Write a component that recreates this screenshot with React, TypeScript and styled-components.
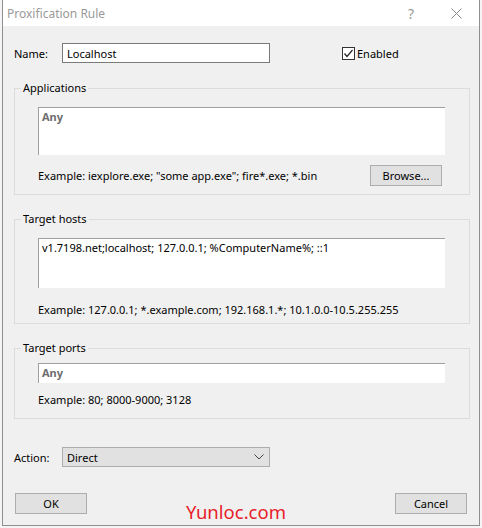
import React from "react";
import styled, { createGlobalStyle } from "styled-components";

const GlobalStyle = createGlobalStyle`
  html, body {
    margin: 0;
    padding: 0;
    background: #f4f4f4;
  }
  body {
    font-family: "Noto Sans", "Open Sans", Arial, sans-serif;
    font-size: 11px;
    color: #000;
  }
`;

const Window = styled.div`
  margin-left: 2px;
  width: 478px;
  height: 526px;
  box-sizing: border-box;
  border: 1px solid #8f8f8f;
  border-top: none;
  background: #f0f0f0;
  display: flex;
  flex-direction: column;
`;

const TitleBar = styled.div`
  height: 26px;
  background: #fff;
  display: flex;
  align-items: center;
  padding-left: 4px;
`;

const Title = styled.div`
  flex: 1;
  color: #999;
  font-size: 12px;
`;

const TitleButton = styled.div<{ $w: number }>`
  width: ${({ $w }) => $w}px;
  height: 26px;
  display: flex;
  align-items: center;
  justify-content: center;
  color: #9a9a9a;
  font-size: 14px;
`;

const Body = styled.div`
  flex: 1;
  padding: 17px 0 0 11px;
  display: flex;
  flex-direction: column;
`;

const Row = styled.div<{ $mt?: number }>`
  display: flex;
  align-items: center;
  margin-top: ${({ $mt }) => $mt ?? 0}px;
`;

const Label = styled.span`
  width: 48px;
`;

const TextInput = styled.div<{ $w: number }>`
  width: ${({ $w }) => $w}px;
  height: 20px;
  box-sizing: border-box;
  border: 1px solid #7a7a7a;
  background: #fff;
  display: flex;
  align-items: center;
  padding-left: 4px;
`;

const CheckLabel = styled.label`
  display: flex;
  align-items: center;
  margin-left: 72px;
  gap: 2px;
`;

const Box = styled.span`
  width: 13px;
  height: 13px;
  box-sizing: border-box;
  border: 1px solid #333;
  background: #fff;
  display: flex;
  align-items: center;
  justify-content: center;
`;

const Group = styled.fieldset<{ $mt: number; $pb: number }>`
  width: 456px;
  box-sizing: border-box;
  margin: ${({ $mt }) => $mt}px 0 0 0;
  padding: 0 0 ${({ $pb }) => $pb}px 23px;
  border: 1px solid #dcdcdc;
  min-width: 0;
`;

const Legend = styled.legend`
  margin-left: -17px;
  padding: 0 2px;
  line-height: 16px;
  height: 16px;
`;

const Memo = styled.div<{ $h: number; $mt: number }>`
  width: 407px;
  height: ${({ $h }) => $h}px;
  margin-top: ${({ $mt }) => $mt}px;
  box-sizing: border-box;
  background: #fff;
  border-top: 1px solid #a0a0a0;
  border-left: 1px solid #a0a0a0;
  padding: 1px 3px;
  line-height: 15px;
`;

const Placeholder = styled.span`
  font-weight: bold;
  color: #6d6d6d;
`;

const Hint = styled.div<{ $mt?: number }>`
  margin-top: ${({ $mt }) => $mt ?? 0}px;
  line-height: 16px;
`;

const HintRow = styled.div`
  width: 404px;
  margin-top: 10px;
  display: flex;
  align-items: center;
  justify-content: space-between;
`;

const Button = styled.button`
  width: 72px;
  height: 21px;
  box-sizing: border-box;
  border: 1px solid #adadad;
  background: #e1e1e1;
  font-family: inherit;
  font-size: 11px;
  color: #000;
  padding: 0;
`;

const Select = styled.div`
  width: 208px;
  height: 20px;
  box-sizing: border-box;
  border: 1px solid #adadad;
  background: #e1e1e1;
  display: flex;
  align-items: center;
  justify-content: space-between;
  padding: 0 5px 0 4px;
`;

const Footer = styled.div`
  margin-top: 26px;
  width: 452px;
  margin-left: 1px;
  display: flex;
  align-items: flex-start;
  justify-content: space-between;
`;

const Watermark = styled.span`
  color: #e8202a;
  font-size: 18.5px;
  line-height: 20px;
  margin-right: 10px;
  margin-top: 9px;
`;

const App: React.FC = () => (
  <>
    <GlobalStyle />
    <Window>
      <TitleBar>
        <Title>Proxification Rule</Title>
        <TitleButton $w={44}>?</TitleButton>
        <TitleButton $w={46}>
          <svg width="11" height="11" viewBox="0 0 11 11">
            <path d="M0.5 0.5 L10.5 10.5 M10.5 0.5 L0.5 10.5" stroke="#8a8a8a" strokeWidth="1" fill="none" />
          </svg>
        </TitleButton>
      </TitleBar>
      <Body>
        <Row>
          <Label>Name:</Label>
          <TextInput $w={208}>Localhost</TextInput>
          <CheckLabel>
            <Box>
              <svg width="11" height="11" viewBox="0 0 11 11">
                <path d="M1.5 5.5 L4 8.5 L9.5 2" stroke="#222" strokeWidth="1.2" fill="none" />
              </svg>
            </Box>
            Enabled
          </CheckLabel>
        </Row>

        <Group $mt={17} $pb={8}>
          <Legend>Applications</Legend>
          <Memo $h={48} $mt={11}>
            <Placeholder>Any</Placeholder>
          </Memo>
          <HintRow>
            <span>Example: iexplore.exe; "some app.exe"; fire*.exe; *.bin</span>
            <Button>Browse...</Button>
          </HintRow>
        </Group>

        <Group $mt={16} $pb={5}>
          <Legend>Target hosts</Legend>
          <Memo $h={50} $mt={11}>
            v1.7198.net;localhost; 127.0.0.1; %ComputerName%; ::1
          </Memo>
          <Hint $mt={14}>Example: 127.0.0.1; *.example.com; 192.168.1.*; 10.1.0.0-10.5.255.255</Hint>
        </Group>

        <Group $mt={16} $pb={10}>
          <Legend>Target ports</Legend>
          <Memo $h={20} $mt={7}>
            <Placeholder>Any</Placeholder>
          </Memo>
          <Hint $mt={9}>Example: 80; 8000-9000; 3128</Hint>
        </Group>

        <Row $mt={28}>
          <Label>Action:</Label>
          <Select>
            <span>Direct</span>
            <svg width="10" height="6" viewBox="0 0 10 6">
              <path d="M0.5 0.5 L5 5 L9.5 0.5" stroke="#444" strokeWidth="1" fill="none" />
            </svg>
          </Select>
        </Row>

        <Footer>
          <Button>OK</Button>
          <Watermark>Yunloc.com</Watermark>
          <Button>Cancel</Button>
        </Footer>
      </Body>
    </Window>
  </>
);

export default App;
